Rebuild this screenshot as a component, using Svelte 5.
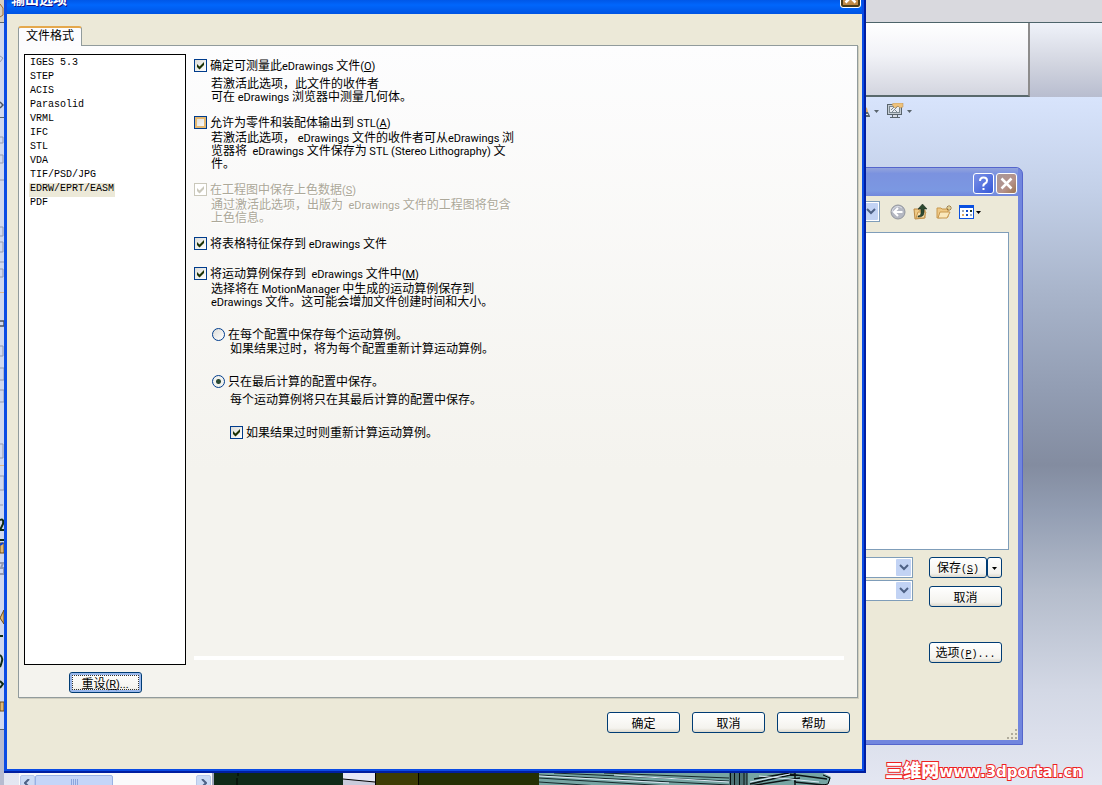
<script>
    let formats = ['IGES 5.3', 'STEP', 'ACIS', 'Parasolid', 'VRML', 'IFC', 'STL', 'VDA', 'TIF/PSD/JPG', 'EDRW/EPRT/EASM', 'PDF'];
    let format = 'EDRW/EPRT/EASM';
    let keepMotion = 'last';

    // &X marks the access key of a caption
    const options = [
        {
            id: 'measure',
            label: '确定可测量此eDrawings 文件(&O)',
            lines: ['若激活此选项，此文件的收件者', '可在 eDrawings 浏览器中测量几何体。'],
            checked: true,
            loose: true
        },
        {
            id: 'stl',
            label: '允许为零件和装配体输出到 STL(&A)',
            lines: ['若激活此选项， eDrawings 文件的收件者可从eDrawings 浏', '览器将  eDrawings 文件保存为 STL (Stereo Lithography) 文', '件。'],
            hot: true
        },
        {
            id: 'shaded',
            label: '在工程图中保存上色数据(&S)',
            lines: ['通过激活此选项，出版为  eDrawings 文件的工程图将包含', '上色信息。'],
            checked: true,
            disabled: true
        },
        {
            id: 'tables',
            label: '将表格特征保存到 eDrawings 文件',
            lines: [],
            checked: true
        },
        {
            id: 'motion',
            label: '将运动算例保存到  eDrawings 文件中(&M)',
            lines: ['选择将在 MotionManager 中生成的运动算例保存到', 'eDrawings 文件。这可能会增加文件创建时间和大小。'],
            checked: true
        }
    ];

    // latin words are set one size smaller than the chinese around them
    function split(text) {
        return text.split(/(&[A-Z]|[A-Za-z(). ]+)/).filter((part) => part !== '');
    }
</script>

{#snippet mixed(text)}
    {#each split(text) as part}{#if part[0] === '&'}<u class="latin">{part[1]}</u>{:else if /^[A-Za-z(). ]/.test(part)}<span class="latin">{part}</span>{:else}{part}{/if}{/each}
{/snippet}

<div class="desktop">
    <div class="app">
        <div class="menubar"></div>
        <div class="ribbon"><div class="ribbon-panel"></div></div>
        <div class="viewport">
            <div class="view-tools">
                <svg width="6" height="16" viewBox="0 0 6 16">
                    <path d="M0 3l3 2 1 4H0z" fill="#e0a860" />
                    <path d="M0 9h4l2 4v1H0z" fill="#59646c" />
                    <path d="M0 11h4v1H0z" fill="#e6e9ee" />
                </svg>
                <svg class="drop" width="5" height="3" viewBox="0 0 5 3"><path d="M0 0h5L2.500 3z" fill="#59646c" /></svg>
                <svg class="monitor" width="17" height="16" viewBox="0 0 17 16">
                    <rect x="0.500" y="1.500" width="14" height="10" fill="#c4ccd4" stroke="#59646c" />
                    <rect x="2.500" y="3.500" width="10" height="6" fill="#e8ecf2" stroke="#7c8890" />
                    <path d="M4 7l3-3M5 9l5-5M7 6l3 3" fill="none" stroke="#7c8890" />
                    <path d="M5 1l3-1h8v4l-3 1-2-2-3 2-2-2z" fill="#eec27c" stroke="#b48a4c" stroke-width="0.500" />
                    <path d="M5 12h6v2h2v1H3v-1h2z" fill="#59646c" />
                    <path d="M6 12h4v2H6z" fill="#d8dce4" />
                </svg>
                <svg class="drop" width="5" height="3" viewBox="0 0 5 3"><path d="M0 0h5L2.500 3z" fill="#59646c" /></svg>
            </div>
        </div>
        <div class="bottom">
            <div class="hscroll">
                <button class="arrow" aria-label="Scroll left"><svg width="7" height="9" viewBox="0 0 7 9"><path d="M5 0L1 4l4 4" fill="none" stroke="#4d6185" stroke-width="2" /></svg></button>
                <div class="thumb"><i></i><i></i><i></i><i></i></div>
                <button class="arrow end" aria-label="Scroll right"><svg width="7" height="9" viewBox="0 0 7 9"><path d="M2 0l4 4-4 4" fill="none" stroke="#4d6185" stroke-width="2" /></svg></button>
            </div>
            <svg class="model" width="620" height="13" viewBox="0 0 620 13">
                <rect width="129" height="13" fill="#0f2a18" />
                <path d="M24 0v3M23 5v8" stroke="#000" />
                <path d="M129 0h32v13h-32z" fill="#c9cbdb" />
                <path d="M129 0h32v9l-32-3z" fill="#e6e8f6" />
                <path d="M129 6l32 3" stroke="#000" />
                <rect x="161" width="165" height="13" fill="#243004" />
                <rect x="161" width="43" height="13" fill="#3d3d04" />
                <path d="M204.500 0v13M161.500 0v13" stroke="#000" />
                <path d="M325 0h284l8 4-2 6-5 3H325z" fill="#76a5a3" />
                <path d="M325 2l190 10M325 5l130 8M340 0l175 8M325 9l60 4M390 0l125 5" stroke="#16282b" />
                <path d="M325 3l130 7M400 2l115 7" stroke="#dce8f4" />
                <path d="M515 0h18v13h-18z" fill="#4d7275" />
                <path d="M516.500 0v13M520.500 0v13M525.500 0v13M530 0v13M533 0v13" stroke="#081010" />
                <path d="M536 11l45-10M536 13l50-8M540 6l35-6M581 0v13M575 1l38 5M580 9l30 3" stroke="#0b1416" stroke-width="1.500" />
                <path d="M536 9l40-8M545 3l60 6" stroke="#dce8f4" />
                <path d="M609 2l7 3-2 6-5 1" fill="none" stroke="#000" />
            </svg>
        </div>
    </div>

    <svg class="gutter" width="4" height="785" viewBox="0 0 4 785">
        <rect width="4" height="730" fill="#d0d8ee" />
        <rect width="4" height="22" fill="#d8cfc0" />
        <path d="M0 4l3 4v7l-3 2" fill="none" stroke="#a06c30" />
        <path d="M0 22.500h4M0 117.500h4M0 729.500h4" stroke="#59646c" />
        <path d="M0 56l3 2-3 4M0 137h3v6H0M0 155h3v8H0M0 180h4M0 227h3v9H0M0 242h3v10H0M0 262h4M0 269h3v8H0M0 346h3v10H0M0 368h4v12H0M0 390h4v12H0M0 444h3v14H0M0 476h4v14H0M0 505h3" fill="none" stroke="#9299b0" />
        <path d="M0 102l3 3-3 3M0 321h4v5H0" fill="none" stroke="#4a5360" stroke-width="1.500" />
        <path d="M0 520q4-2 3 4l-3 6h4M0 540h4M0 655q3 2 2 6t-2 6M0 636h3M0 681l3 3-3 4" fill="none" stroke="#102c14" stroke-width="2" />
        <path d="M0 543h4v10H0zM4 610v14l-4-6zM0 702h4v9H0z" fill="#dfb878" stroke="#6b4b18" />
        <path d="M0 545l3-2" stroke="#0840d8" stroke-width="2" />
        <path d="M0 563h3l-2 5h3v6H0" fill="none" stroke="#9299b0" stroke-width="2" />
        <path d="M0 292.500h4M0 465.500h4" stroke="#dcb98c" />
        <rect y="730" width="4" height="55" fill="#b6bbd0" />
    </svg>

    <div class="window save">
        <div class="titlebar">
            <button class="caption help" aria-label="Help"><svg width="19" height="19" viewBox="0 0 19 19"><path d="M6 7q0-3.500 3.500-3.500T13 6.500q0 2-2 3t-1.500 3M9.500 14v2" fill="none" stroke="#fff" stroke-width="2" /></svg></button>
            <button class="caption close" aria-label="Close"><svg width="19" height="19" viewBox="0 0 19 19"><path d="M4.500 4.500l10 10M14.500 4.500l-10 10" stroke="#fff" stroke-width="2.500" /></svg></button>
        </div>
        <div class="client">
            <div class="places">
                <select class="combo look-in" aria-label="Folder"></select>
                <button class="tool" aria-label="Back">
                    <svg width="16" height="16" viewBox="0 0 16 16">
                        <circle cx="8" cy="8" r="7" fill="#b5b8c2" stroke="#92969e" />
                        <path d="M2 8a6 6 0 0 1 10-4" fill="none" stroke="#dadce6" />
                        <path d="M12.500 8H5M8 4L4 8l4 4" fill="none" stroke="#fff" stroke-width="2" />
                    </svg>
                </button>
                <button class="tool" aria-label="Up one level">
                    <svg width="16" height="16" viewBox="0 0 16 16">
                        <path d="M1 5h4l1 1h6v8l-10 1z" fill="#efc985" stroke="#b98945" />
                        <path d="M3 14l2-6h8l-2 6z" fill="#f8e0ac" stroke="#c8984f" />
                        <path d="M5 12q3 0 3-3V5H5l4.500-5L14 5h-3v4q0 4-6 4z" fill="#2d4a30" stroke="#16251a" stroke-width="0.500" />
                    </svg>
                </button>
                <button class="tool" aria-label="New folder">
                    <svg width="16" height="16" viewBox="0 0 16 16">
                        <path d="M1 4h4l1 1h6v8l-11 1z" fill="#efc985" stroke="#c8984f" />
                        <path d="M2 14l2-6h10l-3 6z" fill="#fae8bc" stroke="#c8984f" />
                        <path d="M13 1v6M10 4h6M11 2l4 4M15 2l-4 4" stroke="#8a6524" stroke-width="0.800" />
                        <circle cx="13" cy="4" r="1" fill="#fff3b0" />
                    </svg>
                </button>
                <button class="tool wide" aria-label="Views">
                    <svg width="22" height="14" viewBox="0 0 22 14">
                        <rect x="0.500" y="0.500" width="14" height="13" fill="#fff" stroke="#0a50e0" />
                        <path d="M0 0h15v3H0z" fill="#0a50e0" />
                        <path d="M3 5h2v2H3zM11 9h2v2h-2z" fill="#9ea8b8" />
                        <path d="M7 5h2v2H7zM7 9h2v2H7z" fill="#1048c8" />
                        <path d="M11 5h2v2h-2z" fill="#1b3524" />
                        <path d="M3 9h2v2H3z" fill="#e0a860" />
                        <path d="M17 6h5l-2.500 3z" fill="#000" />
                    </svg>
                </button>
            </div>
            <div class="files"></div>
            <div class="save-form">
                <div class="fields">
                    <select class="combo" aria-label="File name"></select>
                    <select class="combo" aria-label="File type"></select>
                </div>
                <div class="save-buttons">
                    <div class="split">
                        <button class="push">保存<span class="song">(<u>S</u>)</span></button>
                        <button class="push more" aria-label="Save menu"><svg width="5" height="3" viewBox="0 0 5 3"><path d="M0 0h5L2.500 3z" /></svg></button>
                    </div>
                    <button class="push">取消</button>
                    <button class="push settings">选项<span class="song">(<u>P</u>)...</span></button>
                </div>
            </div>
            <svg class="grip" width="12" height="12" viewBox="0 0 12 12">
                <path d="M9 1h2v2H9zM5 5h2v2H5zM9 5h2v2H9zM1 9h2v2H1zM5 9h2v2H5zM9 9h2v2H9z" fill="#b0ac9c" />
            </svg>
        </div>
    </div>

    <div class="window export">
        <div class="titlebar">
            <h1>输出选项</h1>
            <button class="caption close hot" aria-label="Close"><svg width="19" height="19" viewBox="0 0 19 19"><path d="M4.500 4.500l10 10M14.500 4.500l-10 10" stroke="#fff" stroke-width="2.500" /></svg></button>
        </div>
        <div class="client">
            <button class="tab">文件格式</button>
            <div class="panel">
                <div class="formats">
                    <select size="11" bind:value={format} aria-label="文件格式">
                        {#each formats as name}
                            <option value={name}>{name}</option>
                        {/each}
                    </select>
                    <button class="push focused">重设<span class="latin">(<u>R</u>)...</span></button>
                </div>
                <div class="options">
                    {#each options as option}
                        <div class="option {option.id}" class:disabled={option.disabled} class:loose={option.loose}>
                            <label>
                                <input type="checkbox" class:hot={option.hot} checked={option.checked} disabled={option.disabled} />
                                <span>{@render mixed(option.label)}</span>
                            </label>
                            {#if option.lines.length}
                                <p>{#each option.lines as line}<span class="line">{@render mixed(line)}</span>{/each}</p>
                            {/if}
                        </div>
                    {/each}
                    <div class="option sub">
                        <label>
                            <input type="radio" name="motion" value="each" bind:group={keepMotion} />
                            <span>在每个配置中保存每个运动算例。</span>
                        </label>
                        <p>如果结果过时，将为每个配置重新计算运动算例。</p>
                    </div>
                    <div class="option sub loose">
                        <label>
                            <input type="radio" name="motion" value="last" bind:group={keepMotion} />
                            <span>只在最后计算的配置中保存。</span>
                        </label>
                        <p>每个运动算例将只在其最后计算的配置中保存。</p>
                    </div>
                    <div class="option sub nested">
                        <label>
                            <input type="checkbox" checked />
                            <span>如果结果过时则重新计算运动算例。</span>
                        </label>
                    </div>
                    <hr />
                </div>
            </div>
            <div class="actions">
                <button class="push">确定</button>
                <button class="push">取消</button>
                <button class="push">帮助</button>
            </div>
        </div>
    </div>

    <a class="site" href="http://www.3dportal.cn"><b>三维网</b>www.3dportal.cn</a>
</div>

<style>
    :global(body) {
        margin: 0;
    }

    .desktop, .desktop * {
        box-sizing: border-box;
    }

    .desktop {
        position: relative;
        height: 100vh;
        overflow: hidden;
        font: 12px/14px "Noto Sans CJK SC", sans-serif;
        color: #000;
    }

    .desktop button, .desktop select {
        font: inherit;
        color: inherit;
        margin: 0;
        padding: 0;
    }

    .latin {
        font-family: Roboto, sans-serif;
        font-size: 11px;
        line-height: 1;
        white-space: pre;
    }

    .song {
        font-family: "Liberation Mono", monospace;
        font-size: 10px;
    }

    /* application behind the dialogs */
    .app {
        height: 100%;
        display: flex;
        flex-direction: column;
        background: linear-gradient(#d8e4fc 97px, #c3d0e8 190px, #a9b5cb 290px, #929db3 390px, #838ca0 465px, #929db2 510px, #b4bccb 590px, #d3d8e5 690px, #e4e7f2 785px);
    }

    .menubar {
        height: 23px;
        background: #d9d9de;
        border-bottom: 1px solid #4d646a;
    }

    .ribbon {
        height: 74px;
        padding-right: 72px;
        background: linear-gradient(#eff2f9, #d2d5e0 55%, #b8bdcf);
    }

    .ribbon-panel {
        height: 100%;
        background: linear-gradient(#fff, #f1f2f7 45%, #d3d5df);
        border: solid #8d8c8c;
        border-width: 0 2px 2px 0;
        border-bottom-color: #59696c;
    }

    .viewport {
        flex: 1;
    }

    .view-tools {
        display: flex;
        align-items: center;
        justify-content: flex-end;
        padding: 6px 190px 0 0;
    }

    .monitor {
        margin: 0 3px 0 8px;
    }

    .view-tools .drop:nth-child(2) {
        margin-left: 4px;
    }

    .bottom {
        display: flex;
        height: 12px;
        padding-left: 19px;
        overflow: hidden;
    }

    .hscroll {
        display: flex;
        width: 195px;
        height: 18px;
        padding: 2px 1px 0 1px;
        background: #fafafb;
        border-right: 2px solid #9da3ba;
    }

    .desktop .arrow {
        width: 15px;
        height: 17px;
        padding-bottom: 1px;
        border: 1px solid #b8c8ea;
        border-radius: 2px;
        background: #cbdbf5;
        line-height: 0;
    }

    .desktop .arrow.end {
        margin-left: auto;
    }

    .thumb {
        width: 78px;
        height: 17px;
        display: flex;
        justify-content: center;
        gap: 1px;
        padding-top: 3px;
        border: 1px solid #98b1e4;
        border-radius: 2px;
        background: #c4d5f8;
    }

    .thumb i {
        width: 1px;
        height: 6px;
        background: #8ca5dc;
    }

    .model {
        flex: none;
    }

    .gutter {
        position: absolute;
        left: 0;
        top: 0;
    }

    /* windows */
    .window {
        position: absolute;
        display: flex;
        flex-direction: column;
    }

    .window .client {
        flex: 1;
        display: flex;
        flex-direction: column;
        min-height: 0;
        background: #ece9d8;
    }

    .titlebar {
        display: flex;
        align-items: center;
    }

    .desktop .caption {
        width: 21px;
        height: 21px;
        border: 1px solid #fff;
        border-radius: 3px;
        line-height: 0;
    }

    .caption.help {
        background: linear-gradient(135deg, #7c92e6, #3558d8);
    }

    .caption.close {
        background: linear-gradient(135deg, #a8989a, #b5928a 60%, #9c7450);
    }

    .caption.close.hot {
        background: linear-gradient(#e8b878, #b8803c);
        box-shadow: inset 0 0 0 2px #4a3c18;
    }

    .desktop .push {
        min-width: 73px;
        height: 21px;
        border: 1px solid #003c74;
        border-radius: 3px;
        background: linear-gradient(#fff, #f4f3ee 80%, #dcd8cc);
        line-height: 18px;
        white-space: nowrap;
    }

    .desktop .push.focused {
        outline: 1px dotted #333;
        outline-offset: -4px;
        box-shadow: inset 0 0 0 2px #9ab8ec;
    }

    /* save dialog */
    .save {
        top: 167px;
        right: 79px;
        bottom: 40px;
        width: 460px;
        padding: 0 4px 4px;
        border: 1px solid #5465cc;
        border-radius: 7px 7px 0 0;
        background: #7186de;
    }

    .save .titlebar {
        height: 28px;
        justify-content: flex-end;
        gap: 2px;
        padding: 2px 1px 0 0;
        background: linear-gradient(#93a4dc, #7b92df 20%, #7b98e2 80%, #7187dc);
    }

    .places {
        display: flex;
        align-items: center;
        gap: 7px;
        padding: 5px 37px 0 0;
    }

    .combo {
        appearance: none;
        height: 21px;
        border: 1px solid #7f9db9;
        border-radius: 0;
        background:
            url("data:image/svg+xml,%3Csvg xmlns='http://www.w3.org/2000/svg' width='15' height='17'%3E%3Crect width='15' height='17' rx='1' fill='%23c2d3f4'/%3E%3Cpath d='M4 6l4 4 4-4' fill='none' stroke='%234d6185' stroke-width='2'/%3E%3C/svg%3E") right 1px center no-repeat #fff;
    }

    .desktop .look-in {
        flex: 1;
        margin-right: 3px;
    }

    .desktop .tool {
        width: 16px;
        height: 16px;
        border: 0;
        background: none;
        line-height: 0;
    }

    .desktop .tool.wide {
        width: 22px;
    }

    .files {
        flex: 1;
        margin: 10px 9px 0 0;
        border: 1px solid #7f9db9;
        background: #fff;
    }

    .save-form {
        display: flex;
        gap: 16px;
        padding: 7px 16px 77px 0;
    }

    .fields {
        flex: 1;
        display: flex;
        flex-direction: column;
        gap: 2px;
    }

    .save-buttons {
        display: flex;
        flex-direction: column;
        gap: 8px;
        width: 73px;
    }

    .split {
        display: flex;
    }

    .desktop .split .push {
        flex: 1;
        min-width: 0;
    }

    .desktop .split .more {
        flex: 0 0 15px;
        line-height: 0;
    }

    .desktop .push.settings {
        margin-top: 27px;
    }

    .grip {
        position: absolute;
        right: 4px;
        bottom: 4px;
    }

    /* export dialog */
    .export {
        top: -16px;
        left: 4px;
        right: 236px;
        bottom: 12px;
        padding: 0 4px 4px 3px;
        border-radius: 7px 7px 0 0;
        background: #0a4be4;
        box-shadow: inset -2px -2px 0 #001ea0;
    }

    .export .titlebar {
        height: 30px;
        justify-content: space-between;
        padding: 0 1px 3px 4px;
        background: linear-gradient(#0058ee, #0054e3 50%, #0066fc 70%, #0054e3);
    }

    .export h1 {
        margin: 0;
        font-size: 14px;
        line-height: 20px;
        color: #fff;
        text-shadow: 1px 1px #0f1089;
    }

    .export .client {
        padding: 12px 4px 12px 11px;
    }

    .desktop .tab {
        align-self: flex-start;
        width: 64px;
        height: 20px;
        padding-bottom: 4px;
        margin-bottom: -1px;
        z-index: 1;
        border: 1px solid #919b9c;
        border-top: 2px solid #e5a84c;
        border-bottom: 0;
        border-radius: 3px 3px 0 0;
        background: #fcfcfe;
        line-height: 14px;
    }

    .panel {
        flex: 1;
        display: flex;
        gap: 8px;
        min-height: 0;
        padding: 8px 13px 4px 5px;
        border: 1px solid #919b9c;
        background: linear-gradient(#fdfdfe, #f4f3ee 65%);
        box-shadow: 1px 1px #d0cebf;
    }

    .formats {
        flex: none;
        display: flex;
        flex-direction: column;
        align-items: center;
        gap: 7px;
        width: 162px;
    }

    .desktop .formats select {
        flex: 1;
        width: 100%;
        padding-top: 2px;
        border: 1px solid #000;
        border-radius: 0;
        outline: 0;
        background: #fff;
        font: 10px/14px "Liberation Mono", monospace;
        overflow: hidden;
    }

    .formats option {
        width: fit-content;
        min-height: 0;
        height: 14px;
        padding: 0 1px;
        margin-left: 4px;
        color: #000;
    }

    .formats option:checked {
        background: linear-gradient(#ece9d8, #ece9d8);
        color: #000;
    }

    .options {
        flex: 1;
        display: flex;
        flex-direction: column;
        padding-top: 4px;
    }

    .option {
        margin-bottom: 13px;
        white-space: nowrap;
    }

    .option.tables {
        margin-bottom: 16px;
    }

    .option.motion, .option.sub {
        margin-bottom: 20px;
    }

    .option label {
        display: flex;
        align-items: center;
        gap: 3px;
        height: 14px;
    }

    .option p {
        margin: 1px 0 0 17px;
        line-height: 13px;
    }

    .option.sub p {
        margin: 0 0 0 18px;
    }

    .option.loose p {
        margin-top: 4px;
    }

    .option.sub {
        margin-left: 18px;
    }

    .option.nested {
        margin-left: 36px;
    }

    .line {
        display: block;
        height: 13px;
        white-space: pre;
    }

    .disabled {
        color: #aca899;
        text-shadow: 1px 1px #fff;
    }

    input {
        appearance: none;
        flex: none;
        width: 13px;
        height: 13px;
        margin: 0;
        border: 1px solid #003c8c;
        background: linear-gradient(135deg, #dcdcd7, #fff);
    }

    input[type='checkbox']:checked {
        background-image: url("data:image/svg+xml,%3Csvg xmlns='http://www.w3.org/2000/svg' width='11' height='11'%3E%3Cpath d='M2 4l2.500 2.500L9 2v3L4.500 9.500 2 7z' fill='%231c3204'/%3E%3C/svg%3E"), linear-gradient(135deg, #dcdcd7, #fff);
    }

    input.hot {
        box-shadow: inset 0 0 0 2px #e5b870;
    }

    input[type='checkbox']:disabled {
        border-color: #cac8bb;
        background: url("data:image/svg+xml,%3Csvg xmlns='http://www.w3.org/2000/svg' width='11' height='11'%3E%3Cpath d='M2 4l2.500 2.500L9 2v3L4.500 9.500 2 7z' fill='%23cac8bb'/%3E%3C/svg%3E") #fff;
    }

    input[type='radio'] {
        border-radius: 50%;
    }

    input[type='radio']:checked {
        background: radial-gradient(circle, #2b4a34 0 2px, #f2f2ee 3px);
    }

    hr {
        width: 100%;
        height: 4px;
        margin: auto 0 33px;
        border: 0;
        background: #fff;
    }

    .actions {
        display: flex;
        justify-content: flex-end;
        gap: 12px;
        padding: 14px 8px 24px 0;
    }

    .site {
        position: absolute;
        right: 19px;
        bottom: 4px;
        font: bold 15px/18px "DejaVu Sans", "Noto Sans CJK SC", sans-serif;
        color: #fff;
        text-decoration: none;
        -webkit-text-stroke: 2px #ee2222;
        paint-order: stroke fill;
    }

    .site b {
        font-size: 18px;
    }
</style>
